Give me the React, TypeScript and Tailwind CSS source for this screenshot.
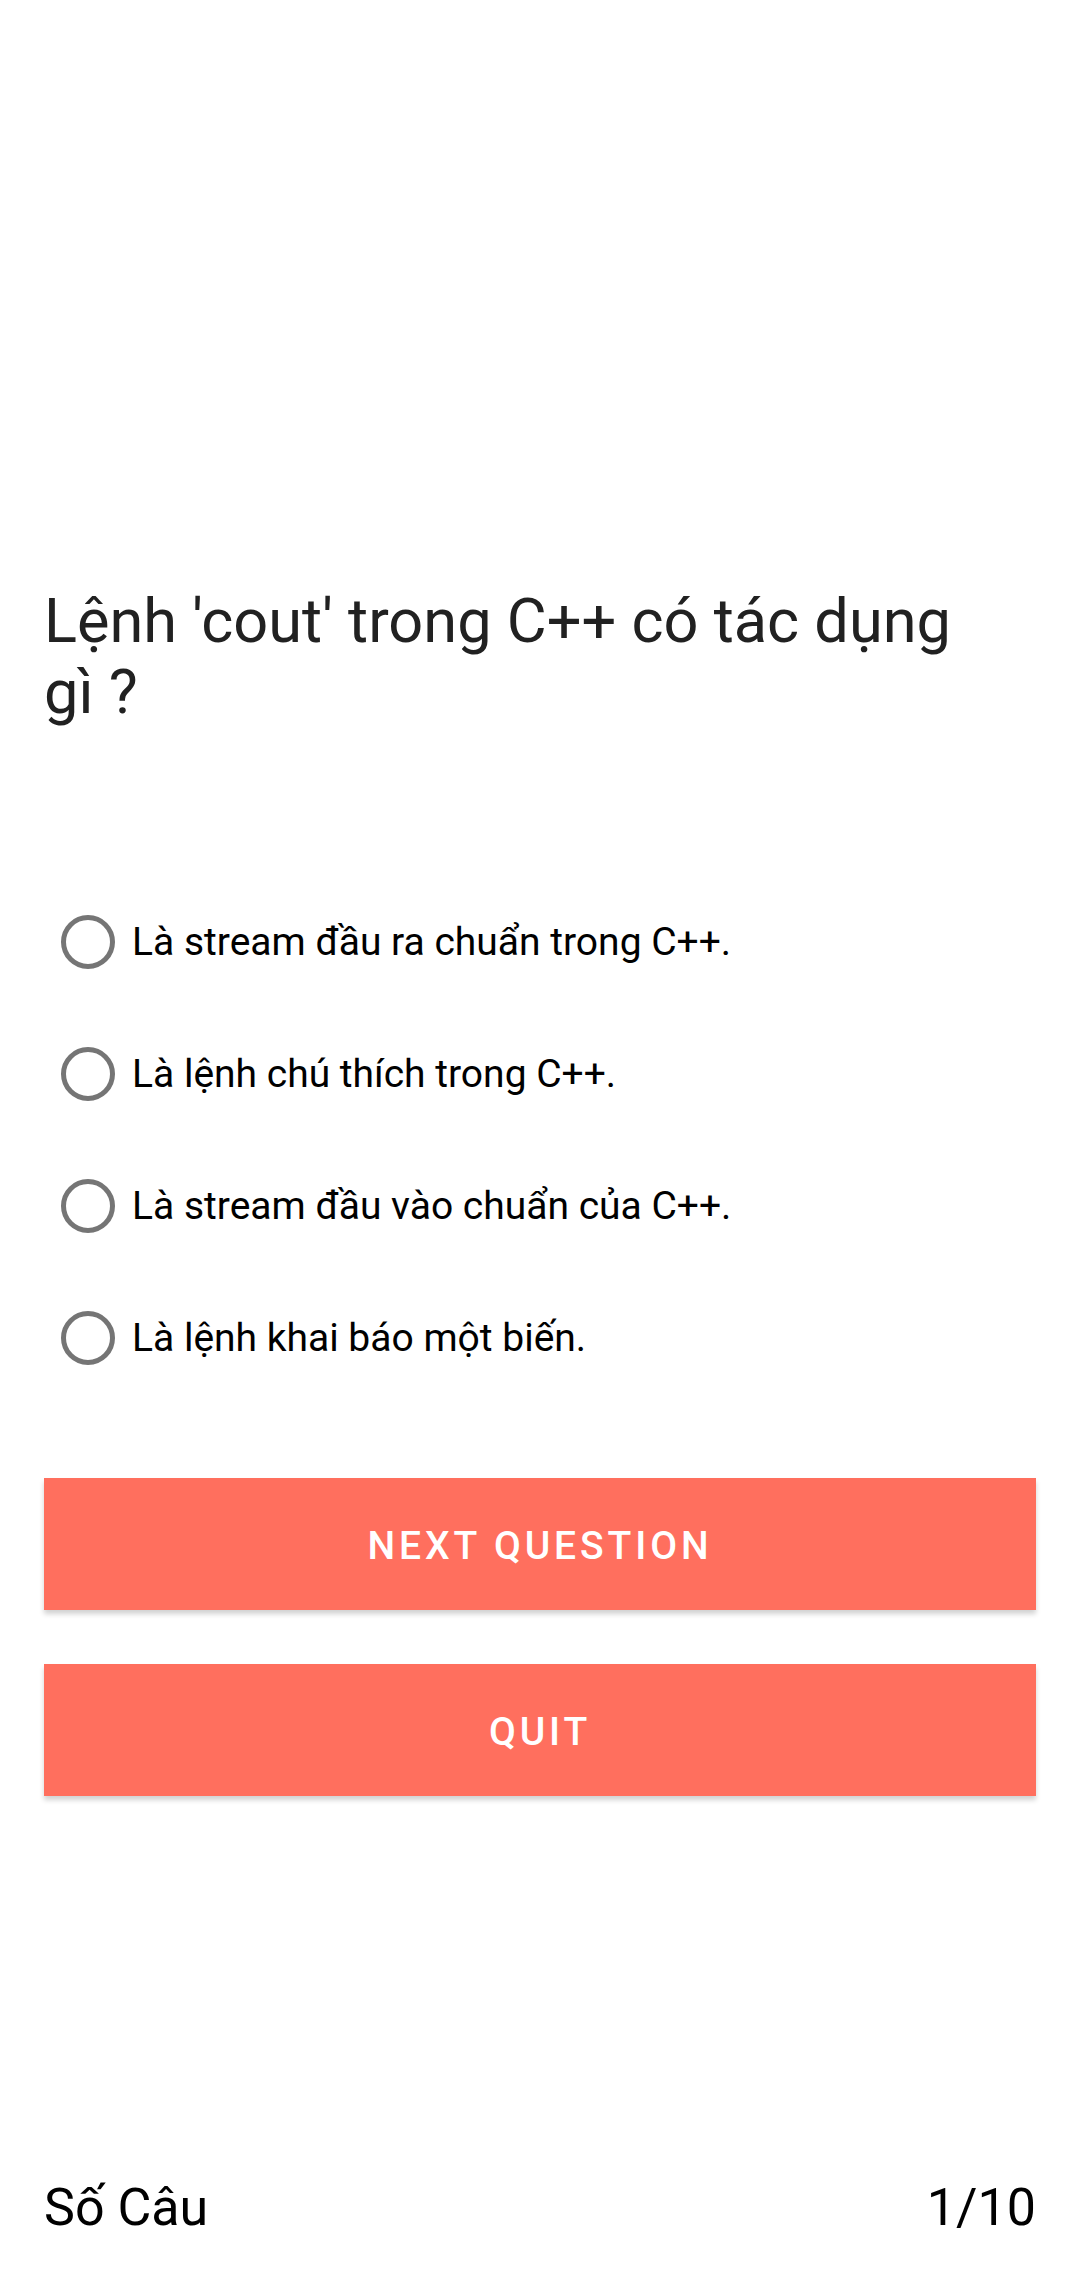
const options = [
  'Là stream đầu ra chuẩn trong C++.',
  'Là lệnh chú thích trong C++.',
  'Là stream đầu vào chuẩn của C++.',
  'Là lệnh khai báo một biến.',
];

function Radio() {
  return (
    <div className="flex h-[132px] w-[88px] shrink-0 items-center justify-center">
      <div className="h-[54px] w-[54px] rounded-full border-[5px] border-[#757575]" />
    </div>
  );
}

export default function App() {
  return (
    <div
      className="flex h-[2280px] w-[1080px] flex-col bg-white"
      style={{ fontFamily: 'Roboto, "Noto Sans", sans-serif' }}
    >
      {/* Question */}
      <div className="mt-[586px] pl-[44px] pr-[80px] text-[61.3px] leading-[71px] text-[#212121]">
        Lệnh 'cout' trong C++ có tác dụng gì ?
      </div>

      {/* Answers */}
      <div className="mt-[148px] flex flex-col px-[44px]">
        {options.map((o) => (
          <div key={o} className="flex h-[132px] items-center">
            <Radio />
            <span className="text-[39px] text-black">{o}</span>
          </div>
        ))}
      </div>

      {/* Buttons */}
      <div className="mt-[74px] flex flex-col gap-[54px] px-[44px]">
        <button className="h-[132px] w-full bg-[#ff6f5e] pt-[5px] text-[39px] font-medium uppercase tracking-[0.1em] text-white shadow-[0_4px_5px_rgba(0,0,0,0.18)]">
          Next Question
        </button>
        <button className="h-[132px] w-full bg-[#ff6f5e] pt-[5px] text-[39px] font-medium uppercase tracking-[0.1em] text-white shadow-[0_4px_5px_rgba(0,0,0,0.18)]">
          Quit
        </button>
      </div>

      {/* Footer */}
      <div className="mt-auto mb-[42px] flex items-center justify-between px-[44px] text-[52px] leading-[60px] text-black">
        <span>Số Câu</span>
        <span>1/10</span>
      </div>
    </div>
  );
}
